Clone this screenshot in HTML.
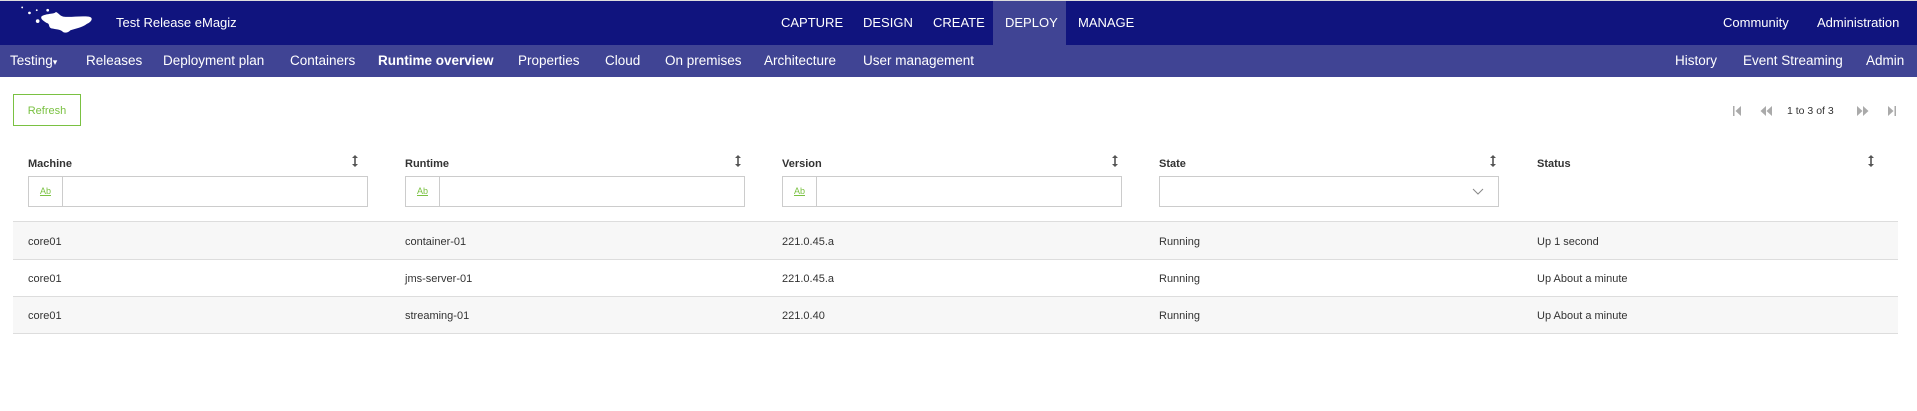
<!DOCTYPE html>
<html><head><meta charset="utf-8"><style>
*{margin:0;padding:0;box-sizing:border-box}
body{width:1917px;height:411px;background:#fff;font-family:"Liberation Sans",sans-serif;position:relative;overflow:hidden;color:#333}
.a{position:absolute;white-space:nowrap}
.top{position:absolute;left:0;top:0;width:1917px;height:45px;background:#10147e;border-top:1px solid #ddd}
.sub{position:absolute;left:0;top:45px;width:1917px;height:32px;background:#404494}
.nt{color:#fff;font-size:13px;top:15px}
.st{color:#fff;font-size:13.5px;top:53px}
.h{font-size:11px;font-weight:bold;color:#333;top:158px}
.srt{top:154px}
.inp{position:absolute;top:176px;height:31px;border:1px solid #ccc;background:#fff}
.ab{position:absolute;left:0;top:0;width:34px;height:29px;border-right:1px solid #ccc;color:#7ac142;font-size:9px;text-decoration:underline;text-align:center;line-height:29px}
.row{position:absolute;left:13px;width:1885px;border-top:1px solid #ddd}
.c{font-size:11px;color:#333}
</style></head><body>
<div class="top"></div>
<svg class="a" style="left:10px;top:2px" width="110" height="41" viewBox="0 0 120 45">
<g fill="#fff"><circle cx="13" cy="6" r="1"/><circle cx="21" cy="12" r="1.5"/><circle cx="29" cy="9" r="1"/><circle cx="41" cy="9" r="1.5"/><circle cx="30" cy="21" r="2"/>
<path d="M34 16 C40 12 47 14 50 11 C53 12 54 15 58 16 C66 17 76 15 86 16 C92 17 89 22 84 24 C79 28 72 29 66 31 C63 34 60 34 58 33 C55 30 50 30 45 29 C41 27 44 24 40 23 C37 21 33 19 34 16Z"/></g></svg>
<div class="a nt" style="left:116px">Test Release eMagiz</div>
<div class="a" style="left:993px;top:1px;width:73px;height:44px;background:#404494"></div>
<div class="a nt" style="left:781px">CAPTURE</div>
<div class="a nt" style="left:863px">DESIGN</div>
<div class="a nt" style="left:933px">CREATE</div>
<div class="a nt" style="left:1005px">DEPLOY</div>
<div class="a nt" style="left:1078px">MANAGE</div>
<div class="a nt" style="left:1723px">Community</div>
<div class="a nt" style="left:1817px">Administration</div>
<div class="sub"></div>
<div class="a st" style="left:10px">Testing<span style="font-size:9px">▾</span></div>
<div class="a st" style="left:86px">Releases</div>
<div class="a st" style="left:163px">Deployment plan</div>
<div class="a st" style="left:290px">Containers</div>
<div class="a st" style="left:378px;font-weight:bold">Runtime overview</div>
<div class="a st" style="left:518px">Properties</div>
<div class="a st" style="left:605px">Cloud</div>
<div class="a st" style="left:665px">On premises</div>
<div class="a st" style="left:764px">Architecture</div>
<div class="a st" style="left:863px">User management</div>
<div class="a st" style="left:1675px">History</div>
<div class="a st" style="left:1743px">Event Streaming</div>
<div class="a st" style="left:1866px">Admin</div>
<div class="a" style="left:13px;top:94px;width:68px;height:32px;border:1px solid #7ac142;color:#7ac142;font-size:11px;text-align:center;line-height:32px">Refresh</div>
<svg class="a" style="left:1731px;top:105px" width="170" height="12" viewBox="0 0 170 12" fill="#aaa">
<rect x="2" y="1" width="1.5" height="10"/><path d="M10 1 L4.5 6 L10 11Z"/>
<path d="M35 1 L29.5 6 L35 11Z M41 1 L35.5 6 L41 11Z"/>
<path d="M126 1 L131.5 6 L126 11Z M132 1 L137.5 6 L132 11Z"/>
<path d="M157 1 L162.5 6 L157 11Z"/><rect x="163.5" y="1" width="1.5" height="10"/></svg>
<div class="a" style="left:1787px;top:105px;font-size:10.5px;color:#333">1 to 3 of 3</div>
<div class="a h" style="left:28px">Machine</div>
<div class="a h" style="left:405px">Runtime</div>
<div class="a h" style="left:782px">Version</div>
<div class="a h" style="left:1159px">State</div>
<div class="a h" style="left:1537px">Status</div>
<svg width="0" height="0" style="position:absolute"><defs><g id="s"><path d="M4 1 L7 4 L1 4Z M4 13 L7 10 L1 10Z" fill="#555"/><rect x="3.2" y="3" width="1.6" height="8" fill="#555"/></g></defs></svg>
<svg class="a srt" style="left:351px" width="8" height="14"><use href="#s"/></svg>
<svg class="a srt" style="left:734px" width="8" height="14"><use href="#s"/></svg>
<svg class="a srt" style="left:1111px" width="8" height="14"><use href="#s"/></svg>
<svg class="a srt" style="left:1489px" width="8" height="14"><use href="#s"/></svg>
<svg class="a srt" style="left:1867px" width="8" height="14"><use href="#s"/></svg>
<div class="inp" style="left:28px;width:340px"><div class="ab">Ab</div></div>
<div class="inp" style="left:405px;width:340px"><div class="ab">Ab</div></div>
<div class="inp" style="left:782px;width:340px"><div class="ab">Ab</div></div>
<div class="inp" style="left:1159px;width:340px"><svg class="a" style="right:14px;top:11px" width="12" height="8"><path d="M1 1 L6 6 L11 1" stroke="#888" fill="none"/></svg></div>
<div class="row" style="top:221px;height:38px;background:#f7f7f7"></div>
<div class="row" style="top:259px;height:37px"></div>
<div class="row" style="top:296px;height:38px;background:#f7f7f7;border-bottom:1px solid #ddd"></div>
<div class="a c" style="left:28px;top:236px">core01</div><div class="a c" style="left:405px;top:236px">container-01</div><div class="a c" style="left:782px;top:236px">221.0.45.a</div><div class="a c" style="left:1159px;top:236px">Running</div><div class="a c" style="left:1537px;top:236px">Up 1 second</div>
<div class="a c" style="left:28px;top:273px">core01</div><div class="a c" style="left:405px;top:273px">jms-server-01</div><div class="a c" style="left:782px;top:273px">221.0.45.a</div><div class="a c" style="left:1159px;top:273px">Running</div><div class="a c" style="left:1537px;top:273px">Up About a minute</div>
<div class="a c" style="left:28px;top:310px">core01</div><div class="a c" style="left:405px;top:310px">streaming-01</div><div class="a c" style="left:782px;top:310px">221.0.40</div><div class="a c" style="left:1159px;top:310px">Running</div><div class="a c" style="left:1537px;top:310px">Up About a minute</div>
</body></html>
